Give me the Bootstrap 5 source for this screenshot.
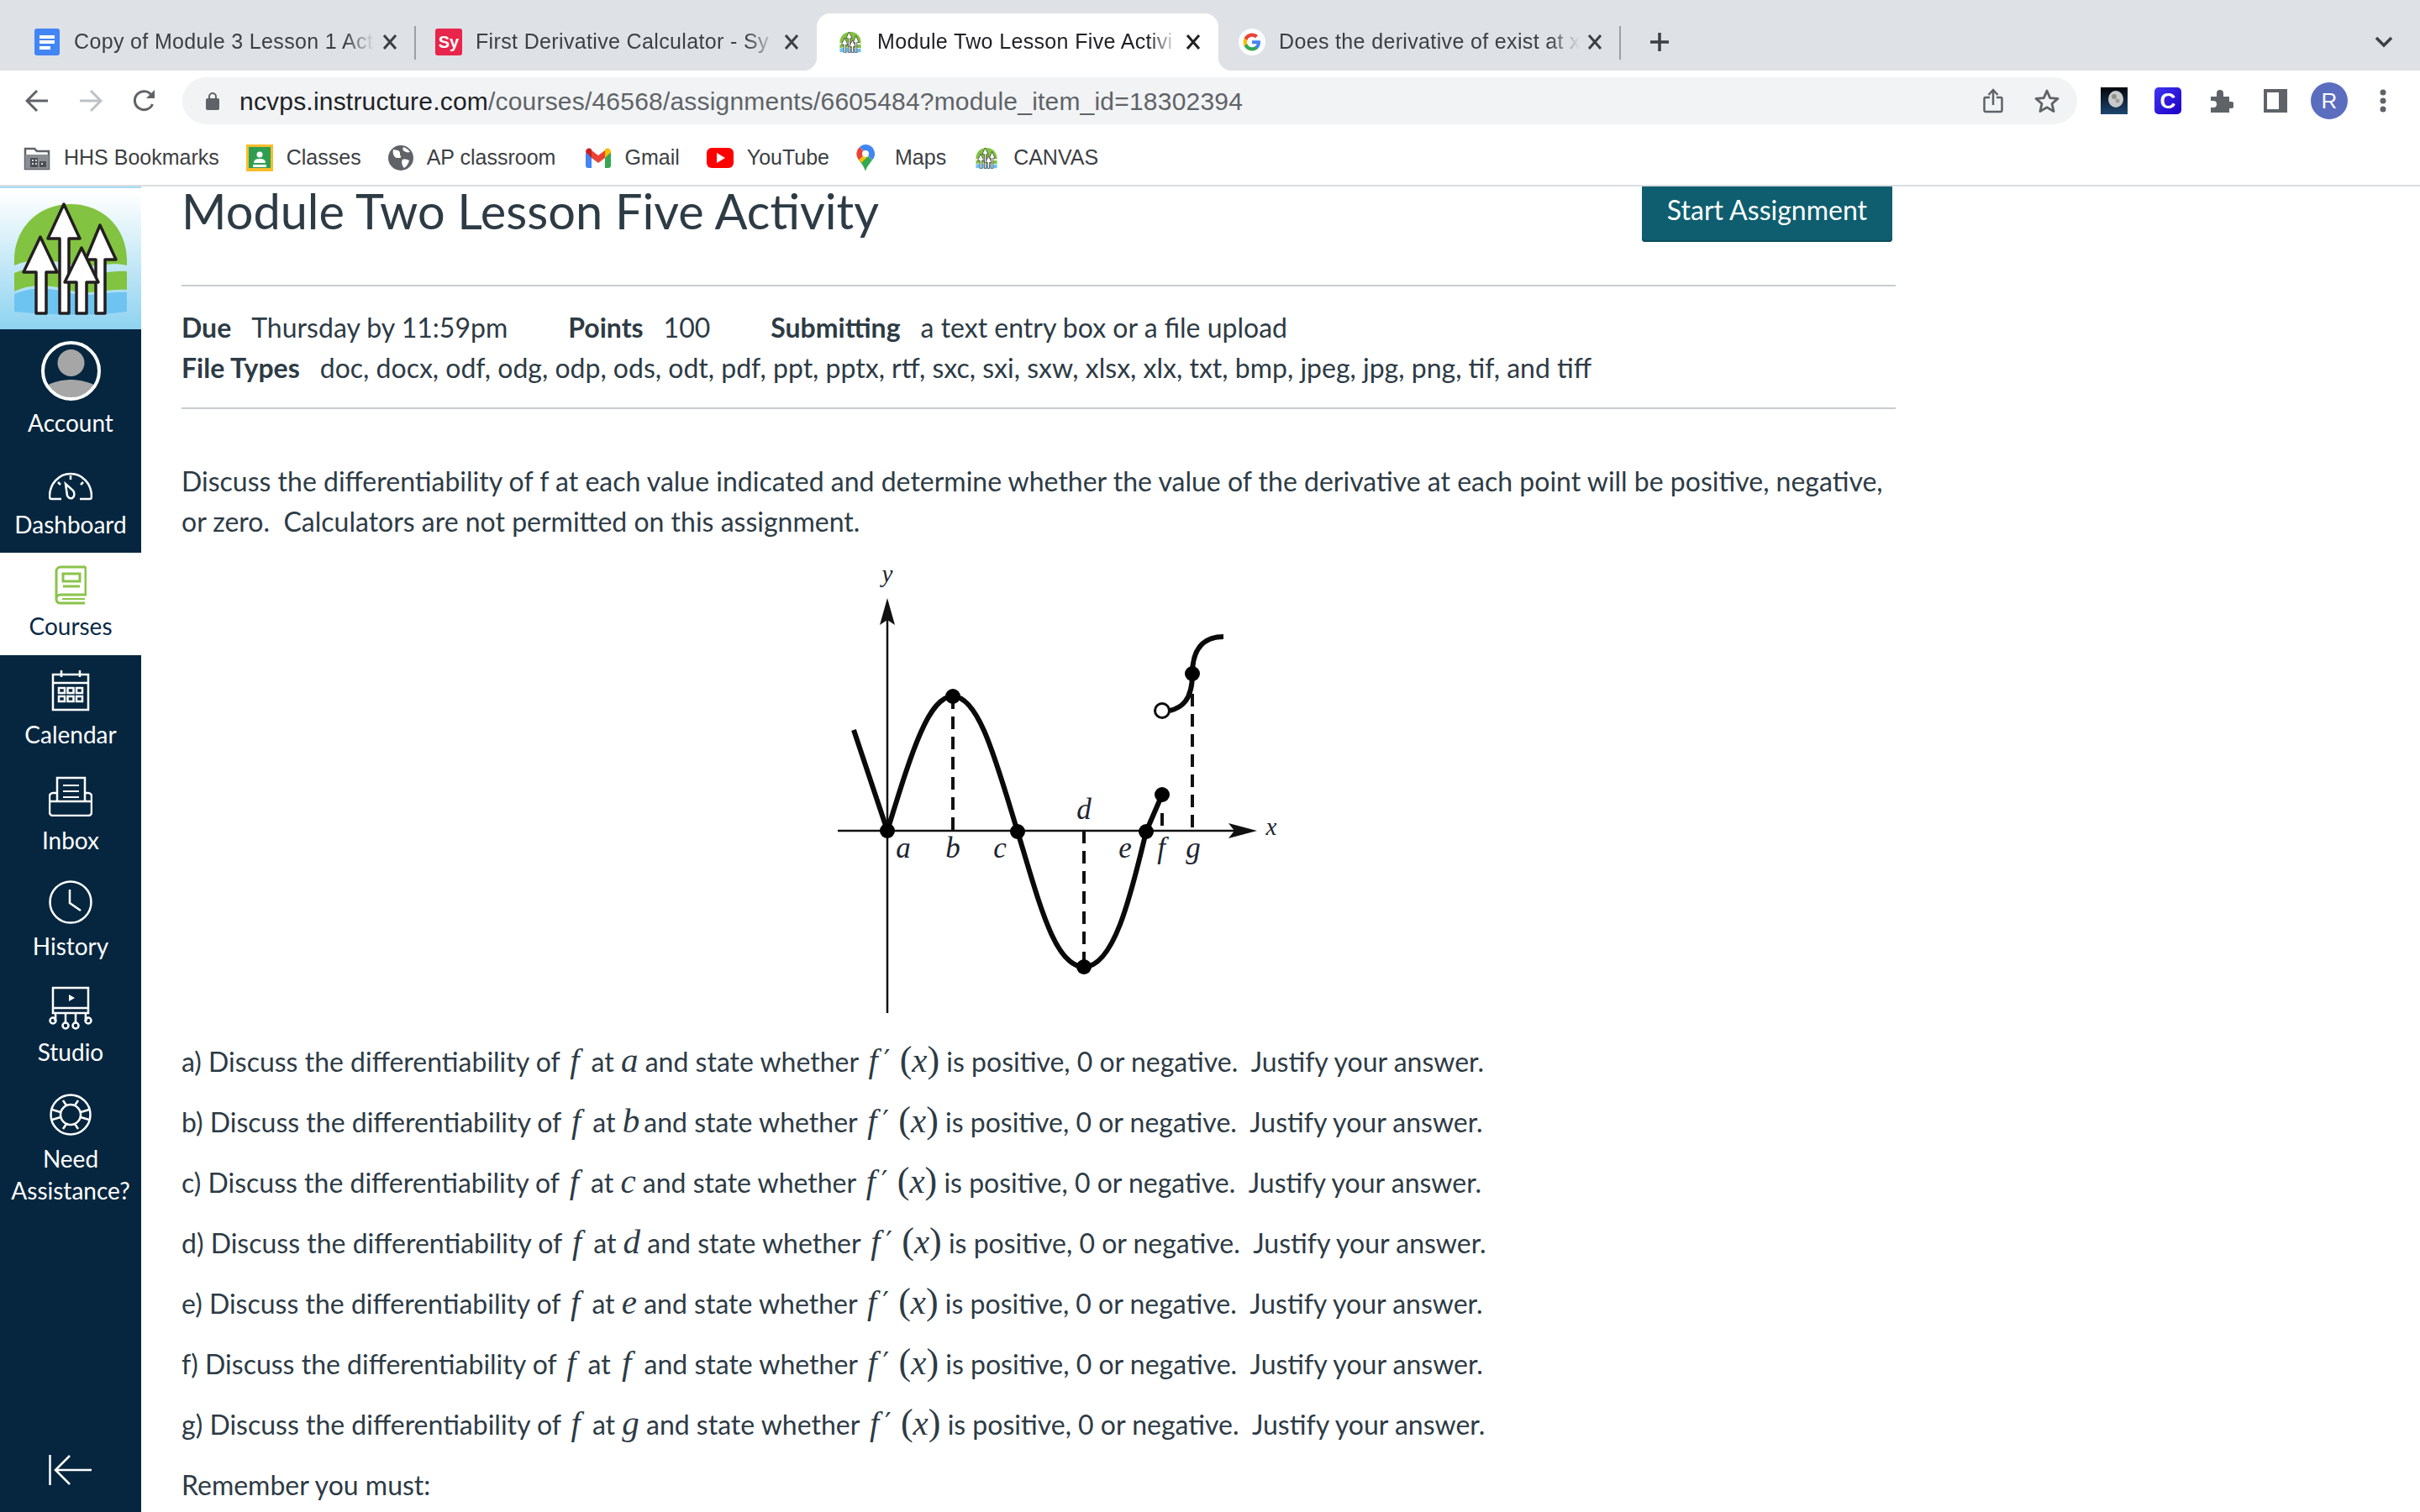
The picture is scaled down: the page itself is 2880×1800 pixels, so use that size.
<!DOCTYPE html>
<html lang="en">

<head>
    <meta charset="UTF-8">
    <meta name="viewport" content="width=device-width, initial-scale=1.0">
    <title>Module Two Lesson Five Activity</title>
    <link href="https://cdn.jsdelivr.net/npm/bootstrap@5.3.0/dist/css/bootstrap.min.css" rel="stylesheet">
    <style>
        html, body { height: 100%; overflow: hidden; }
        body { font-family: "Lato", "Liberation Sans", sans-serif; color: #2d3b45; background: #fff; display: flex; flex-direction: column; }

        /* browser chrome */
        .chrome { font-family: "Liberation Sans", Arial, sans-serif; color: #3c4043; flex: none; }
        .tabstrip { height: 84px; background: #dee1e6; padding: 16px 0 0 16px; }
        .tabitem { width: 478px; height: 68px; padding: 0 16px 0 24px; position: relative; flex: none; }
        .tabitem.divided::after { content: ""; position: absolute; right: -1px; top: 15px; height: 40px; width: 2px; background: #9aa0a6; }
        .tabitem.current { background: #fff; border-radius: 16px 16px 0 0; color: #202124; }
        .tabitem.current::before, .flare-right { content: ""; position: absolute; bottom: 0; width: 16px; height: 16px; }
        .tabitem.current::before { left: -16px; background: radial-gradient(circle at 0 0, transparent 16px, #fff 16.5px); }
        .flare-right { right: -16px; background: radial-gradient(circle at 100% 0, transparent 16px, #fff 16.5px); }
        .tabicon { width: 32px; height: 32px; flex: none; }
        .tabtitle { font-size: 25px; letter-spacing: .35px; margin-left: 16px; width: 358px; overflow: hidden; white-space: nowrap; flex: none; -webkit-mask-image: linear-gradient(to right, #000 90%, transparent 100%); mask-image: linear-gradient(to right, #000 90%, transparent 100%); }
        .tabclose { width: 32px; height: 32px; margin-left: 2px; flex: none; }
        .symtile { width: 32px; height: 32px; background: #e8254a; color: #fff; font: 700 20px "Liberation Sans", sans-serif; border-radius: 3px; display: flex; align-items: center; justify-content: center; flex: none; }
        .newtab { margin: 12px 0 0 25px; }
        .tabmenu { margin: 12px 27px 0 auto; }
        .toolstrip { height: 72px; background: #fff; padding: 0 12px; }
        .toolbtn { width: 64px; height: 64px; flex: none; }
        .urlpill { height: 56px; background: #f1f3f4; border-radius: 28px; margin: 0 12px 0 13px; padding: 0 4px 0 28px; }
        .urltext { font-size: 30px; letter-spacing: .2px; margin-left: 24px; color: #5f6368; white-space: nowrap; }
        .urltext b { font-weight: 400; color: #202124; }
        .exttile { width: 32px; height: 32px; background: linear-gradient(135deg, #3f35f0, #1c00c4); color: #fff; font: 700 26px "Liberation Sans", sans-serif; border-radius: 5px; display: flex; align-items: center; justify-content: center; }
        .avatar-r { width: 44px; height: 44px; border-radius: 50%; background: #5b6dbf; color: #fff; font-size: 26px; display: flex; align-items: center; justify-content: center; }
        .bookstrip { height: 66px; background: #fff; padding: 0 0 0 28px; border-bottom: 2px solid #dadce0; font-size: 25px; }
        .bookitem { margin-right: 32px; white-space: nowrap; }
        .bookitem.wider-gap { margin-right: 36px; }
        .bookitem svg { flex: none; margin-right: 16px; }
        .bookitem .pinicon { margin-right: 24px; }

        /* canvas left rail */
        .appbody { flex: 1; min-height: 0; }
        .rail { width: 168px; flex: none; background: #06263f; color: #fff; text-align: center; font-size: 28px; line-height: 38px; }
        .rail-logo { height: 170px; background: linear-gradient(#a5dcf3 0, #a5dcf3 2px, #fff 2px, #fff 8px, #8ed3f0 100%); }
        .rail-logo svg { display: block; }
        .rail-item { height: 126px; padding-top: 14px; }
        .rail-icon { height: 56px; display: flex; align-items: center; justify-content: center; margin-bottom: 5px; }
        .rail-item.acct { height: 144px; }
        .rail-item.acct .rail-icon { height: 71px; margin-bottom: 7px; }
        .rail-item.dash { height: 122px; padding-top: 20px; }
        .rail-item.dash .rail-icon { height: 46px; margin-bottom: 3px; }
        .rail-item.active-item { height: 122px; padding-top: 10px; background: #fff; color: #0a2a47; }
        .rail-item.active-item .rail-icon { margin-bottom: 2px; }
        .rail-item.help-item { padding-top: 15px; }
        .rail-collapse { margin-top: auto; padding-bottom: 32px; }
        .rail-collapse svg { display: block; margin: 0 auto; }

        /* assignment */
        .pagemain { flex: 1; padding: 0 0 0 48px; font-size: 32px; line-height: 48px; }
        .pagecol { width: 2040px; }
        .pagetitle { font-size: 57.7px; line-height: 58px; font-weight: 400; margin: 0; font-family: "Lato", sans-serif; color: #2d3b45; }
        .startbtn { background: #0e5e70; color: #fff; font-size: 32px; line-height: 48px; padding: 4px 30px 14px; border: 0; border-radius: 0 0 4px 4px; margin-right: 4px; box-shadow: inset 0 -2px 0 #0a4c5b; }
        .metablock { border-top: 2px solid #c7cdd1; border-bottom: 2px solid #c7cdd1; margin: 51px 0 0; padding: 25px 0 23px; }
        .metablock b { font-weight: 700; margin-right: 24px; }
        .metagap { margin-right: 72px; }
        .leadtext { margin: 62px 0 0; }
        .graphwrap svg { display: block; margin: 0 auto; }
        .graphwrap text { font-family: "Liberation Serif", serif; font-style: italic; font-size: 35px; fill: #1c2530; text-anchor: middle; }
        .graphwrap text.axisname { font-size: 29px; }
        .qline { margin: 0 0 24px; white-space: nowrap; }
        .mvar { font-family: "Liberation Serif", serif; font-style: italic; font-size: 41px; line-height: 1; }
        .mfunc { font-family: "Liberation Serif", serif; font-style: italic; font-size: 40px; line-height: 1; margin: 0 6px 0 4px; }
        .mfunc-prime { margin-right: 3px; }
        .mprime { font-family: "DejaVu Sans", sans-serif; font-style: normal; font-size: 34px; margin-left: 7px; line-height: 0; vertical-align: 2px; }
        .mparen { font-family: "Liberation Serif", serif; font-size: 44px; line-height: 1; }
        .mvar-f { margin: 0 7px 0 5px; }
        .mvar-b { margin-right: -3px; }
    </style>
</head>

<body>
    <svg width="0" height="0" class="d-none">
        <symbol id="logoart" viewBox="0 0 168 170">
            <path d="M17 88C17 50 45 21 84 21s67 29 67 67v6c-22-6-42 5-67-1-25-6-45-8-67 1z" fill="#82c341"/>
            <path d="M17 103c24-10 44-6 67 0 25 6 45-4 67-2v22c-22-2-42 7-67 1-25-7-45-9-67 1z" fill="#82c341"/>
            <path d="M17 128c24-10 44-7 67-1 25 6 45-3 67-1v23c-45 6-90 4-134 0z" fill="#6ec4f0"/>
            <g fill="#fff" stroke="#231f20" stroke-width="3.5" stroke-linejoin="round">
                <path d="M119 46l19 41h-13v64h-11V87h-12z"/>
                <path d="M76 21l19 41H82v89H71V62H57z"/>
                <path d="M48 60l20 42H55v49H43v-49H28z"/>
                <path d="M97 73l20 41h-14v37H91v-37H77z"/>
            </g>
        </symbol>
    </svg>

    <header class="chrome">
        <div class="tabstrip d-flex">
            <div class="tabitem divided d-flex align-items-center">
                <svg class="tabicon" viewBox="0 0 32 32"><rect x="1" width="30" height="32" rx="3" fill="#4285f4"/><path d="M7 8h18v4H7zM7 14h18v4H7zM7 21h13v4H7z" fill="#fff"/></svg>
                <span class="tabtitle">Copy of Module 3 Lesson 1 Act</span>
                <svg class="tabclose" viewBox="0 0 32 32"><path d="M9 8l14 16M23 8L9 24" stroke="#3c4043" stroke-width="3"/></svg>
            </div>
            <div class="tabitem d-flex align-items-center">
                <span class="symtile">Sy</span>
                <span class="tabtitle">First Derivative Calculator - Sy</span>
                <svg class="tabclose" viewBox="0 0 32 32"><path d="M9 8l14 16M23 8L9 24" stroke="#3c4043" stroke-width="3"/></svg>
            </div>
            <div class="tabitem current d-flex align-items-center">
                <svg class="tabicon"><use href="#logoart"/></svg>
                <span class="tabtitle">Module Two Lesson Five Activi</span>
                <svg class="tabclose" viewBox="0 0 32 32"><path d="M9 8l14 16M23 8L9 24" stroke="#202124" stroke-width="3"/></svg>
                <span class="flare-right"></span>
            </div>
            <div class="tabitem divided d-flex align-items-center">
                <svg class="tabicon" viewBox="0 0 32 32">
                    <circle cx="16" cy="16" r="16" fill="#fff"/>
                    <path d="M26 16.3c0-.8-.1-1.500-.2-2.100H16v4h5.600c-.2 1.300-1 2.400-2.100 3.100v2.600h3.400c2-1.800 3.100-4.500 3.100-7.600z" fill="#4285f4"/>
                    <path d="M16 26.400c2.800 0 5.200-.9 6.900-2.500l-3.400-2.600c-.9.600-2.100 1-3.500 1-2.700 0-5-1.800-5.800-4.300H6.700v2.700c1.700 3.400 5.200 5.700 9.300 5.700z" fill="#34a853"/>
                    <path d="M10.200 18c-.2-.6-.3-1.300-.3-2s.1-1.400.3-2v-2.700H6.700C6 12.700 5.600 14.300 5.600 16s.4 3.300 1.100 4.700z" fill="#fbbc05"/>
                    <path d="M16 9.700c1.500 0 2.900.5 4 1.600l3-3c-1.800-1.700-4.200-2.700-7-2.700-4.100 0-7.600 2.300-9.300 5.700l3.500 2.700c.8-2.500 3.100-4.300 5.800-4.300z" fill="#ea4335"/>
                </svg>
                <span class="tabtitle">Does the derivative of exist at x</span>
                <svg class="tabclose" viewBox="0 0 32 32"><path d="M9 8l14 16M23 8L9 24" stroke="#3c4043" stroke-width="3"/></svg>
            </div>
            <svg class="newtab" width="44" height="44" viewBox="0 0 44 44"><path d="M22 11v22M11 22h22" stroke="#3c4043" stroke-width="3.500"/></svg>
            <svg class="tabmenu" width="32" height="44" viewBox="0 0 32 44"><path d="M7 17l9 9 9-9" fill="none" stroke="#3c4043" stroke-width="3.500"/></svg>
        </div>

        <div class="toolstrip d-flex align-items-center">
            <div class="toolbtn d-flex align-items-center justify-content-center">
                <svg width="28" height="28" viewBox="0 0 28 28"><path d="M27 14H3M14 2L2 14l12 12" fill="none" stroke="#5f6368" stroke-width="3"/></svg>
            </div>
            <div class="toolbtn d-flex align-items-center justify-content-center">
                <svg width="28" height="28" viewBox="0 0 28 28"><path d="M1 14h24M14 2l12 12-12 12" fill="none" stroke="#bdc1c6" stroke-width="3"/></svg>
            </div>
            <div class="toolbtn d-flex align-items-center justify-content-center">
                <svg width="30" height="30" viewBox="0 0 30 30"><path d="M24.500 19a11 11 0 1 1-.4-9.500" fill="none" stroke="#5f6368" stroke-width="3"/><path d="M27 2v10H17z" fill="#5f6368"/></svg>
            </div>
            <div class="urlpill flex-grow-1 d-flex align-items-center">
                <svg width="16" height="22" viewBox="0 0 16 22"><path d="M4 9V6a4 4 0 0 1 8 0v3" fill="none" stroke="#5f6368" stroke-width="2"/><rect y="8" width="16" height="14" rx="2" fill="#5f6368"/></svg>
                <span class="urltext"><b>ncvps.instructure.com</b>/courses/46568/assignments/6605484?module_item_id=18302394</span>
                <div class="toolbtn ms-auto d-flex align-items-center justify-content-center">
                    <svg width="24" height="30" viewBox="0 0 24 30"><path d="M8 11H3a1.500 1.500 0 0 0-1.500 1.500v14A1.500 1.500 0 0 0 3 28h18a1.500 1.500 0 0 0 1.500-1.500v-14A1.500 1.500 0 0 0 21 11h-5" fill="none" stroke="#5f6368" stroke-width="2.500"/><path d="M12 20V3M6.500 8L12 2l5.500 6" fill="none" stroke="#5f6368" stroke-width="2.500"/></svg>
                </div>
                <div class="toolbtn d-flex align-items-center justify-content-center">
                    <svg width="32" height="30" viewBox="0 0 32 30"><path d="M16 3l3.700 8.600 9.300.8-7 6.100 2.100 9.100L16 22.800l-8.100 4.800L10 18.500l-7-6.100 9.300-.8z" fill="none" stroke="#5f6368" stroke-width="2.800" stroke-linejoin="round"/></svg>
                </div>
            </div>
            <div class="toolbtn d-flex align-items-center justify-content-center">
                <svg width="32" height="32" viewBox="0 0 32 32"><defs><linearGradient id="moonsky" x1="0" y1="0" x2="0" y2="1"><stop offset="0" stop-color="#02060c"/><stop offset="1" stop-color="#1d4670"/></linearGradient></defs><rect width="32" height="32" fill="url(#moonsky)"/><ellipse cx="18" cy="14" rx="9" ry="10" fill="#c9c9c9"/><circle cx="16" cy="11" r="3" fill="#8f8f8f"/><circle cx="20" cy="16" r="2.500" fill="#9d9d9d"/></svg>
            </div>
            <div class="toolbtn d-flex align-items-center justify-content-center"><span class="exttile">C</span></div>
            <div class="toolbtn d-flex align-items-center justify-content-center">
                <svg width="28" height="28" viewBox="0 0 28 28"><path d="M1 9h7V5a4 4 0 0 1 8 0v4h7v6h2a4 4 0 0 1 0 8h-2v5H1v-6h3a4 4 0 0 0 0-8H1z" fill="#5f6368"/></svg>
            </div>
            <div class="toolbtn d-flex align-items-center justify-content-center">
                <svg width="28" height="28" viewBox="0 0 28 28"><path fill-rule="evenodd" d="M0 0h28v28H0zM4 4v20h14V4z" fill="#5f6368"/></svg>
            </div>
            <div class="toolbtn d-flex align-items-center justify-content-center"><span class="avatar-r">R</span></div>
            <div class="toolbtn d-flex align-items-center justify-content-center">
                <svg width="8" height="28" viewBox="0 0 8 28"><circle cx="4" cy="4" r="3.500" fill="#5f6368"/><circle cx="4" cy="14" r="3.500" fill="#5f6368"/><circle cx="4" cy="24" r="3.500" fill="#5f6368"/></svg>
            </div>
        </div>

        <div class="bookstrip d-flex align-items-center">
            <div class="bookitem d-flex align-items-center">
                <svg width="32" height="30" viewBox="0 0 32 30"><path d="M2 4h11l3 3h14v21H2z" fill="#fff" stroke="#5f6368" stroke-width="2.500"/><path d="M2 11h28v17H2z" fill="#8a8d91"/><path d="M8 15h9v11H8zM19 19h8v7h-8z" fill="#4b4e52"/><path d="M10 17h2v2h-2zM14 17h2v2h-2zM10 21h2v2h-2zM14 21h2v2h-2zM21 21h2v2h-2z" fill="#d5d7d9"/></svg>
                HHS Bookmarks
            </div>
            <div class="bookitem d-flex align-items-center">
                <svg width="32" height="32" viewBox="0 0 32 32"><rect width="32" height="32" fill="#f8bd2b"/><rect x="3" y="3" width="26" height="25" fill="#2f9e52"/><circle cx="16" cy="12" r="3.500" fill="#fff"/><path d="M9 22c0-4 3-5 7-5s7 1 7 5z" fill="#fff"/><rect x="8" y="24" width="16" height="3" fill="#fff"/></svg>
                Classes
            </div>
            <div class="bookitem wider-gap d-flex align-items-center">
                <svg width="30" height="30" viewBox="0 0 30 30"><circle cx="15" cy="15" r="15" fill="#5f6368"/><path d="M6 5c3 1 5 0 7 2s0 4 2 6-5 3-7 1-3-6-2-9zM17 17c3-1 6 0 8 1-1 4-3 7-6 9-2-2-4-7-2-10zM18 2c3 1 6 3 8 6-3 1-5 0-7-1s-2-3-1-5z" fill="#fff"/></svg>
                AP classroom
            </div>
            <div class="bookitem d-flex align-items-center">
                <svg width="30" height="24" viewBox="0 0 30 24"><path d="M0 5v16a3 3 0 0 0 3 3h4V11z" fill="#4285f4"/><path d="M23 11v13h4a3 3 0 0 0 3-3V5z" fill="#34a853"/><path d="M7 12V3l8 6 8-6v9l-8 6z" fill="#ea4335"/><path d="M0 5c0-4 4-6 7-3v10z" fill="#c5221f"/><path d="M23 2c3-3 7-1 7 3l-7 7z" fill="#fbbc04"/></svg>
                Gmail
            </div>
            <div class="bookitem d-flex align-items-center">
                <svg width="32" height="24" viewBox="0 0 32 24"><rect width="32" height="24" rx="6" fill="#f00"/><path d="M12 6l10 6-10 6z" fill="#fff"/></svg>
                YouTube
            </div>
            <div class="bookitem d-flex align-items-center">
                <svg class="pinicon" width="22" height="32" viewBox="0 0 22 32"><path d="M11 0a11 11 0 0 1 8 18.500L4 3a11 11 0 0 1 7-3z" fill="#4285f4"/><path d="M3 18.500l-1-1.500A11 11 0 0 1 4 3l7 8z" fill="#ea4335"/><path d="M3 18.500c3 4 6 7 8 13.500 1-5 5-9 8-13.500l-8-7.500z" fill="#34a853"/><path d="M3 18.500L11 11l3 3-8 8z" fill="#fbbc04"/><circle cx="11" cy="11" r="4" fill="#fff"/></svg>
                Maps
            </div>
            <div class="bookitem d-flex align-items-center">
                <svg width="32" height="32"><use href="#logoart"/></svg>
                CANVAS
            </div>
        </div>
    </header>

    <div class="appbody d-flex">
        <nav class="rail d-flex flex-column">
            <div class="rail-logo"><svg width="168" height="170"><use href="#logoart"/></svg></div>

            <div class="rail-item acct">
                <div class="rail-icon">
                    <svg width="71" height="71" viewBox="0 0 71 71"><defs><clipPath id="acctclip"><circle cx="35.500" cy="35.500" r="32"/></clipPath></defs><g clip-path="url(#acctclip)" fill="#a6a6a6"><circle cx="35.500" cy="26" r="16"/><path d="M4 71V56c3-6 21-10 31.500-10S64 50 67 56v15z"/></g><circle cx="35.500" cy="35.500" r="33.500" fill="none" stroke="#fff" stroke-width="4"/></svg>
                </div>
                Account
            </div>
            <div class="rail-item dash">
                <div class="rail-icon">
                    <svg width="52" height="34" viewBox="0 0 52 34"><path d="M15 32H3c-1.500 0-2-1-2-3 0-15 11-27 25-27s25 12 25 27c0 2-.5 3-2 3H37" fill="none" stroke="#fff" stroke-width="2.500"/><path d="M20 14l9 8c2 3 2 7-1 9-3 1-5-1-6-3z" fill="none" stroke="#fff" stroke-width="2.500"/><path d="M26 4v5M11 12l3 3M41 12l-3 3" stroke="#fff" stroke-width="2.500"/></svg>
                </div>
                Dashboard
            </div>
            <div class="rail-item active-item">
                <div class="rail-icon">
                    <svg width="38" height="47" viewBox="0 0 38 47" fill="none" stroke="#8bc34a" stroke-width="3"><path d="M37 2H7a5 5 0 0 0-5 5v34a5 5 0 0 0 5 4h29M37 2v33H7a5 5 0 0 0 0 10"/><path d="M9 40h27" stroke-width="2"/><rect x="10" y="10" width="20" height="9"/><path d="M10 25h20"/></svg>
                </div>
                Courses
            </div>
            <div class="rail-item">
                <div class="rail-icon">
                    <svg width="46" height="50" viewBox="0 0 46 50" fill="none" stroke="#fff" stroke-width="2.500"><path d="M2 6h42v42H2zM2 16h42M12 1v8M34 1v8"/><path d="M9 22h7v6H9zM19.500 22h7v6h-7zM30 22h7v6h-7zM9 32h7v6H9zM19.500 32h7v6h-7zM30 32h7v6h-7z" stroke-width="2.500"/></svg>
                </div>
                Calendar
            </div>
            <div class="rail-item">
                <div class="rail-icon">
                    <svg width="52" height="48" viewBox="0 0 52 48" fill="none" stroke="#fff" stroke-width="2.500"><path d="M10 30V2h33v28"/><path d="M10 20H5a4 4 0 0 0-4 4v19a4 4 0 0 0 4 4h42a4 4 0 0 0 4-4V24a4 4 0 0 0-4-4h-4M1 30h50"/><path d="M17 11h19M17 18h19M17 25h19" stroke-width="2"/></svg>
                </div>
                Inbox
            </div>
            <div class="rail-item">
                <div class="rail-icon">
                    <svg width="52" height="52" viewBox="0 0 52 52" fill="none" stroke="#fff" stroke-width="2.500"><circle cx="26" cy="26" r="24.500"/><path d="M25 11v16l13 9"/></svg>
                </div>
                History
            </div>
            <div class="rail-item">
                <div class="rail-icon">
                    <svg width="52" height="52" viewBox="0 0 52 52" fill="none" stroke="#fff" stroke-width="2.500"><path d="M5 2h42v30H5zM5 26h42"/><path d="M24 10l7 4-7 4z" fill="#fff" stroke="none"/><path d="M8 32c0 6 1 8-2 8M20 32v11M32 32v11M44 32c0 6-1 8 2 8"/><circle cx="5" cy="41" r="3.500"/><circle cx="20" cy="47" r="3.500"/><circle cx="32" cy="47" r="3.500"/><circle cx="47" cy="41" r="3.500"/></svg>
                </div>
                Studio
            </div>
            <div class="rail-item help-item">
                <div class="rail-icon">
                    <svg width="50" height="50" viewBox="0 0 50 50" fill="none" stroke="#fff" stroke-width="2.500"><ellipse cx="25" cy="25" rx="23.500" ry="23.500"/><circle cx="25" cy="25" r="12"/><path d="M16 8l4 6M34 8l-4 6M3 19l10 3M47 19l-10 3M3 31l10-3M47 31l-10-3M16 42l4-6M34 42l-4-6"/></svg>
                </div>
                Need Assistance?
            </div>
            <div class="rail-collapse">
                <svg width="52" height="36" viewBox="0 0 52 36" fill="none" stroke="#fff" stroke-width="2.500"><path d="M1.500 0v36M51 18H8M25 1L8 18l17 17"/></svg>
            </div>
        </nav>

        <main class="pagemain">
            <div class="pagecol">
                <div class="d-flex justify-content-between align-items-start">
                    <h1 class="pagetitle">Module Two Lesson Five Activity</h1>
                    <button type="button" class="startbtn">Start Assignment</button>
                </div>

                <div class="metablock">
                    <div><b>Due</b><span class="metagap">Thursday by 11:59pm</span><b>Points</b><span class="metagap">100</span><b>Submitting</b>a text entry box or a file upload</div>
                    <div><b>File Types</b>doc, docx, odf, odg, odp, ods, odt, pdf, ppt, pptx, rtf, sxc, sxi, sxw, xlsx, xlx, txt, bmp, jpeg, jpg, png, tif, and tiff</div>
                </div>

                <p class="leadtext">Discuss the differentiability of f at each value indicated and determine whether the value of the derivative at each point will be positive, negative, or zero.&nbsp; Calculators are not permitted on this assignment.</p>

                <div class="graphwrap">
                    <svg width="600" height="595" viewBox="936 645 600 595">
                        <path d="M1056 1206V730M997 989h480" stroke="#111" stroke-width="2.500" fill="none"/>
                        <path d="M1056 712l9 32-9-6-9 6zM1496 989l-34 9 7-9-7-9z" fill="#111"/>
                        <path d="M1134 829v160M1290 989v162M1419 802v187M1383 968v21" stroke="#111" stroke-width="4" stroke-dasharray="15 9" fill="none"/>
                        <path d="M1016 869l40 120C1085 895 1105 829 1134 829c31 0 51 76 77 161 26 85 44 161 79 161s55-81 74-161l19-44" stroke="#0a0a0a" stroke-width="6" fill="none"/>
                        <path d="M1392 846c13-3 27-11 27-44 0-27 11-44 37-44" stroke="#0a0a0a" stroke-width="6" fill="none"/>
                        <circle cx="1056" cy="989" r="9"/><circle cx="1134" cy="829" r="9"/><circle cx="1211" cy="990" r="9"/>
                        <circle cx="1290" cy="1151" r="9"/><circle cx="1364" cy="990" r="9"/><circle cx="1383" cy="946" r="9"/><circle cx="1419" cy="802" r="9"/>
                        <circle cx="1383" cy="846" r="8.500" fill="#fff" stroke="#0a0a0a" stroke-width="3"/>
                        <text class="axisname" x="1056" y="693">y</text><text class="axisname" x="1513" y="994">x</text>
                        <text x="1075" y="1021">a</text><text x="1134" y="1021">b</text><text x="1190" y="1021">c</text>
                        <text x="1290" y="975">d</text><text x="1339" y="1021">e</text><text x="1382" y="1021">f</text><text x="1420" y="1021">g</text>
                    </svg>
                </div>

                <div id="questions"></div>
                <p class="qline mb-0">Remember you must:</p>
            </div>
        </main>
    </div>

    <script src="https://cdn.jsdelivr.net/npm/bootstrap@5.3.0/dist/js/bootstrap.bundle.min.js"></script>
    <script>
        // one row per labelled point on the graph
        const questionsBox = document.getElementById("questions");
        "abcdefg".split("").forEach((letter) => {
            const row = `
                <p class="qline">${letter}) Discuss the differentiability of <span class="mfunc">f</span> at <span class="mvar mvar-${letter}">${letter}</span> and state whether <span class="mfunc mfunc-prime">f<span class="mprime">′</span></span> <span class="mparen">(</span><span class="mvar">x</span><span class="mparen">)</span> is positive, 0 or negative.&nbsp; Justify your answer.</p>
            `;
            questionsBox.insertAdjacentHTML("beforeend", row);
        });
    </script>
</body>

</html>
